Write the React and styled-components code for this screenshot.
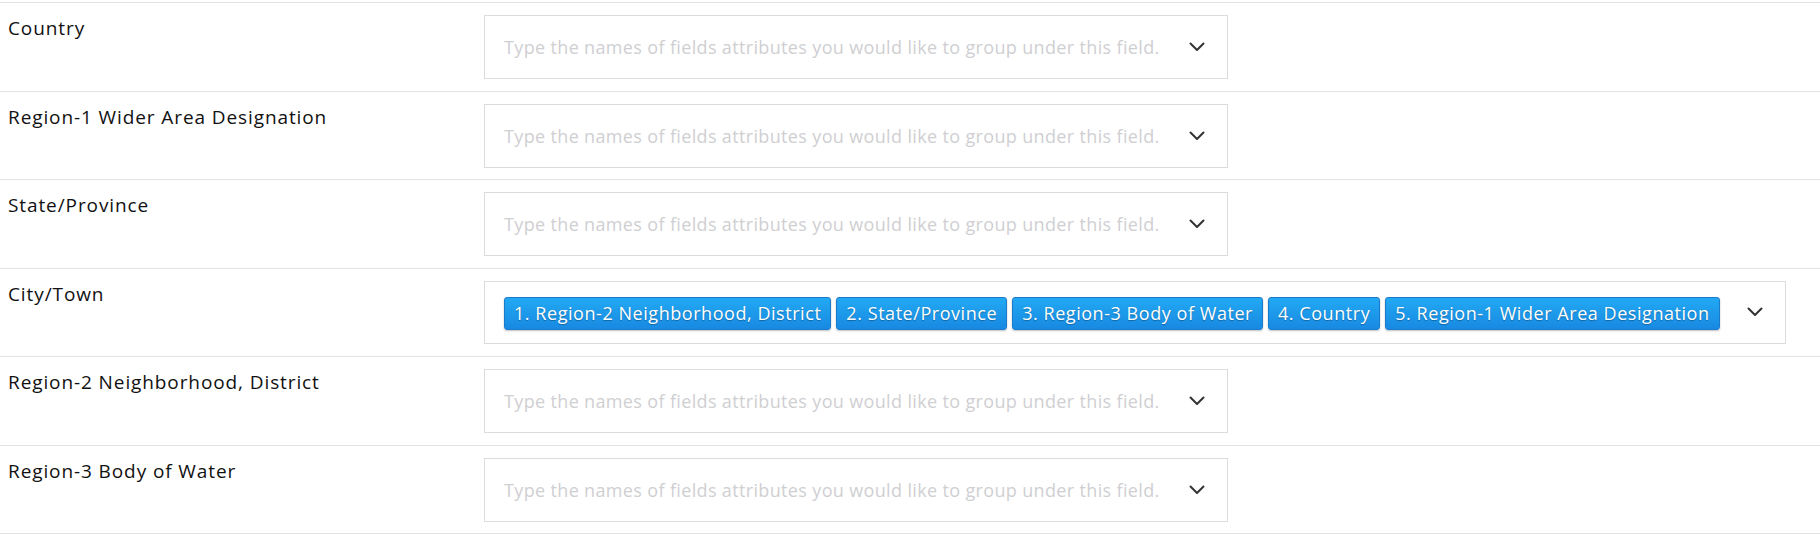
import React from "react";
import styled, { createGlobalStyle } from "styled-components";

const Global = createGlobalStyle`
  html, body { margin: 0; padding: 0; background: #fff; }
  body { font-family: "Open Sans", "Lato", sans-serif; color: #111; }
  * { box-sizing: border-box; }
`;

const List = styled.div`
  margin-top: 2px;
  width: 100%;
  border-bottom: 1px solid #e2e2e8;
`;

const Row = styled.div`
  display: flex;
  align-items: flex-start;
  height: 88.5px;
  padding: 12px 0 0;
  border-top: 1px solid #e2e2e8;
`;

const Label = styled.div`
  width: 484px;
  flex: 0 0 484px;
  padding-left: 8px;
  margin-top: 1px;
  font-size: 19px;
  line-height: 24px;
  letter-spacing: 0.9px;
  color: #111;
`;

const Box = styled.div`
  display: inline-flex;
  align-items: center;
  height: ${(p) => (p.$tags ? "63px" : "64px")};
  padding: 0 22px 0 19px;
  border: 1px solid #dcdce0;
  background: #fff;
`;

const Placeholder = styled.span`
  font-size: 18px;
  letter-spacing: 0.35px;
  color: #cfcfd2;
  white-space: nowrap;
`;

const Tags = styled.div`
  display: flex;
  gap: 5px;
  margin-top: 2px;
`;

const Tag = styled.span`
  display: inline-flex;
  align-items: center;
  height: 33px;
  padding: 0 9px;
  border: 1px solid #1a7acb;
  border-radius: 3px;
  background: linear-gradient(#22a9f3, #1889e2);
  box-shadow: 0 1px 2px rgba(0, 0, 0, 0.25);
  color: #fff;
  font-size: 18px;
  letter-spacing: 0.55px;
  white-space: nowrap;
  text-shadow: 0 1px 1px rgba(0, 0, 0, 0.3);
`;

const Chevron = styled.svg`
  flex: 0 0 auto;
  margin-left: ${(p) => (p.$tags ? "27px" : "29px")};
  display: block;
`;

const ChevronIcon = ({ tags }) => (
  <Chevron $tags={tags} width="16" height="10" viewBox="0 0 16 10">
    <polyline
      points="1.5,1.5 8,8 14.5,1.5"
      fill="none"
      stroke="#333"
      strokeWidth="2"
      strokeLinecap="round"
      strokeLinejoin="round"
    />
  </Chevron>
);

const PH = "Type the names of fields attributes you would like to group under this field.";

const rows = [
  { label: "Country" },
  { label: "Region-1 Wider Area Designation" },
  { label: "State/Province" },
  {
    label: "City/Town",
    tags: [
      "1. Region-2 Neighborhood, District",
      "2. State/Province",
      "3. Region-3 Body of Water",
      "4. Country",
      "5. Region-1 Wider Area Designation",
    ],
  },
  { label: "Region-2 Neighborhood, District" },
  { label: "Region-3 Body of Water" },
];

export default function App() {
  return (
    <>
      <Global />
      <List>
        {rows.map((r) => (
          <Row key={r.label}>
            <Label>{r.label}</Label>
            <Box $tags={!!r.tags}>
              {r.tags ? (
                <Tags>
                  {r.tags.map((t) => (
                    <Tag key={t}>{t}</Tag>
                  ))}
                </Tags>
              ) : (
                <Placeholder>{PH}</Placeholder>
              )}
              <ChevronIcon tags={!!r.tags} />
            </Box>
          </Row>
        ))}
      </List>
    </>
  );
}
